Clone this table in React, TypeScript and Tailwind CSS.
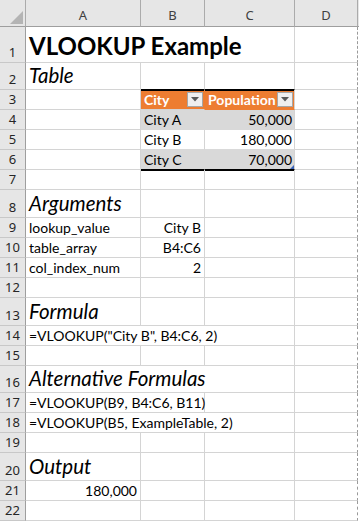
import React from 'react';

const CELL_FONT = "font-['Lato',sans-serif]";

function Row({ n, h, children }: { n?: number; h: string; children?: React.ReactNode }) {
  return (
    <div className={`flex ${h}`}>
      <div className="w-[26px] shrink-0 bg-[#e6e6e6] border-r border-b border-r-[#9e9e9e] border-b-[#c8c8c8] flex items-end justify-center pb-[3px] text-[13px] leading-[13px] text-[#262626] font-['Noto_Sans',sans-serif]">
        {n}
      </div>
      {children}
    </div>
  );
}

function Cell({
  w,
  className = '',
  children,
}: {
  w: string;
  className?: string;
  children?: React.ReactNode;
}) {
  return (
    <div
      className={`${w} shrink-0 border-r border-b border-[#d4d4d4] flex items-end px-[3px] pb-[2px] text-[14px] leading-[15px] text-black whitespace-nowrap ${CELL_FONT} ${className}`}
    >
      {children}
    </div>
  );
}

// column D carries the page-break line on its right side
function CellD({ className = '' }: { className?: string }) {
  return (
    <div
      className={`w-[63px] shrink-0 border-r border-b border-[#d4d4d4] border-r-[#9a9a9a] [border-right-style:dashed] ${className}`}
    />
  );
}

function FilterButton() {
  return (
    <div className="ml-auto mb-[0px] w-[16px] h-[15px] shrink-0 bg-[#efefef] border border-[#a6a6a6] flex items-center justify-center">
      <svg width="8" height="5" viewBox="0 0 8 5">
        <path d="M0 0 L8 0 L4 4.5 Z" fill="#595959" />
      </svg>
    </div>
  );
}

function Heading({ children }: { children: React.ReactNode }) {
  return <span className="italic text-[20.5px] leading-[20px]">{children}</span>;
}

export default function App() {
  return (
    <div className="w-[359px] h-[523px] bg-white overflow-hidden select-none">
      {/* column headers */}
      <div className="flex h-[27px]">
        <div className="w-[26px] shrink-0 bg-[#e6e6e6] border-r border-b border-r-[#ababab] border-b-[#9e9e9e] flex items-end justify-end pr-[2px] pb-[2px]">
          <svg width="13" height="13" viewBox="0 0 13 13">
            <path d="M13 0 L13 13 L0 13 Z" fill="#b4b4b4" />
          </svg>
        </div>
        {[
          ['A', 'w-[115px]'],
          ['B', 'w-[64px]'],
          ['C', 'w-[90px]'],
          ['D', 'w-[63px]'],
        ].map(([l, w]) => (
          <div
            key={l}
            className={`${w} shrink-0 bg-[#e6e6e6] border-r border-b border-r-[#ababab] border-b-[#9e9e9e] flex items-end justify-center pb-[4px] text-[13px] leading-[13px] text-[#404040] font-['Noto_Sans',sans-serif]`}
          >
            {l}
          </div>
        ))}
        <div className="flex-1 bg-[#e6e6e6] border-b border-b-[#9e9e9e]" />
      </div>

      <Row n={1} h="h-[36px]">
        <Cell w="w-[269px]" className="pb-[4px]">
          <span className="font-bold text-[24px] leading-[24px]">VLOOKUP Example</span>
        </Cell>
        <CellD />
      </Row>

      <Row n={2} h="h-[27px]">
        <Cell w="w-[115px]" className="pb-[4px]">
          <Heading>Table</Heading>
        </Cell>
        <Cell w="w-[64px]" className="border-b-black" />
        <Cell w="w-[90px]" className="border-b-black" />
        <CellD />
      </Row>

      <Row n={3} h="h-[20px]">
        <Cell w="w-[115px]" />
        <Cell w="w-[64px]" className="bg-[#ed7d31] border-r-[#ed7d31] shadow-[inset_0_1px_0_#000] pr-[1px] text-white font-bold">
          <span>City</span>
          <FilterButton />
        </Cell>
        <Cell w="w-[90px]" className="bg-[#ed7d31] border-b-[#ed7d31] shadow-[inset_0_1px_0_#000] pr-[1px] text-white font-bold">
          <span>Population</span>
          <FilterButton />
        </Cell>
        <CellD />
      </Row>

      <Row n={4} h="h-[20px]">
        <Cell w="w-[115px]" />
        <Cell w="w-[64px]" className="bg-[#d9d9d9] border-r-[#d9d9d9] border-b-[#d9d9d9]">City A</Cell>
        <Cell w="w-[90px]" className="bg-[#d9d9d9] border-b-[#d9d9d9] justify-end pr-[2px]">50,000</Cell>
        <CellD />
      </Row>

      <Row n={5} h="h-[20px]">
        <Cell w="w-[115px]" />
        <Cell w="w-[64px]" className="border-b-[#d9d9d9]">City B</Cell>
        <Cell w="w-[90px]" className="border-b-[#d9d9d9] justify-end pr-[2px]">180,000</Cell>
        <CellD />
      </Row>

      <Row n={6} h="h-[20px]">
        <Cell w="w-[115px]" />
        <Cell w="w-[64px]" className="bg-[#d9d9d9] border-r-[#d9d9d9] border-b-black">City C</Cell>
        <Cell w="w-[90px]" className="relative bg-[#d9d9d9] border-b-black justify-end pr-[2px]">
          70,000
          <svg className="absolute right-0 bottom-0" width="4" height="4" viewBox="0 0 4 4">
            <path d="M4 0 L4 4 L0 4 Z" fill="#3a63b8" />
          </svg>
        </Cell>
        <CellD />
      </Row>

      <Row n={7} h="h-[20px]">
        <Cell w="w-[115px]" />
        <Cell w="w-[64px]" className="shadow-[inset_0_1px_0_#000]" />
        <Cell w="w-[90px]" className="shadow-[inset_0_1px_0_#000]" />
        <CellD />
      </Row>

      <Row n={8} h="h-[28px]">
        <Cell w="w-[115px]" className="pb-[4px]">
          <Heading>Arguments</Heading>
        </Cell>
        <Cell w="w-[64px]" />
        <Cell w="w-[90px]" />
        <CellD />
      </Row>

      <Row n={9} h="h-[20px]">
        <Cell w="w-[115px]">lookup_value</Cell>
        <Cell w="w-[64px]" className="justify-end">City B</Cell>
        <Cell w="w-[90px]" />
        <CellD />
      </Row>

      <Row n={10} h="h-[20px]">
        <Cell w="w-[115px]">table_array</Cell>
        <Cell w="w-[64px]" className="justify-end">B4:C6</Cell>
        <Cell w="w-[90px]" />
        <CellD />
      </Row>

      <Row n={11} h="h-[20px]">
        <Cell w="w-[115px]">col_index_num</Cell>
        <Cell w="w-[64px]" className="justify-end">2</Cell>
        <Cell w="w-[90px]" />
        <CellD />
      </Row>

      <Row n={12} h="h-[20px]">
        <Cell w="w-[115px]" />
        <Cell w="w-[64px]" />
        <Cell w="w-[90px]" />
        <CellD />
      </Row>

      <Row n={13} h="h-[28px]">
        <Cell w="w-[115px]" className="pb-[4px]">
          <Heading>Formula</Heading>
        </Cell>
        <Cell w="w-[64px]" />
        <Cell w="w-[90px]" />
        <CellD />
      </Row>

      <Row n={14} h="h-[20px]">
        <Cell w="w-[269px]">=VLOOKUP("City B", B4:C6, 2)</Cell>
        <CellD />
      </Row>

      <Row n={15} h="h-[20px]">
        <Cell w="w-[115px]" />
        <Cell w="w-[64px]" />
        <Cell w="w-[90px]" />
        <CellD />
      </Row>

      <Row n={16} h="h-[27px]">
        <Cell w="w-[269px]" className="pb-[4px]">
          <Heading>Alternative Formulas</Heading>
        </Cell>
        <CellD />
      </Row>

      <Row n={17} h="h-[20px]">
        <Cell w="w-[179px]">=VLOOKUP(B9, B4:C6, B11)</Cell>
        <Cell w="w-[90px]" />
        <CellD />
      </Row>

      <Row n={18} h="h-[20px]">
        <Cell w="w-[269px]">=VLOOKUP(B5, ExampleTable, 2)</Cell>
        <CellD />
      </Row>

      <Row n={19} h="h-[20px]">
        <Cell w="w-[115px]" />
        <Cell w="w-[64px]" />
        <Cell w="w-[90px]" />
        <CellD />
      </Row>

      <Row n={20} h="h-[28px]">
        <Cell w="w-[115px]" className="pb-[4px]">
          <Heading>Output</Heading>
        </Cell>
        <Cell w="w-[64px]" />
        <Cell w="w-[90px]" />
        <CellD />
      </Row>

      <Row n={21} h="h-[20px]">
        <Cell w="w-[115px]" className="justify-end">180,000</Cell>
        <Cell w="w-[64px]" />
        <Cell w="w-[90px]" />
        <CellD />
      </Row>

      <Row n={22} h="h-[20px]">
        <Cell w="w-[115px]" />
        <Cell w="w-[64px]" />
        <Cell w="w-[90px]" />
        <CellD />
      </Row>
    </div>
  );
}
